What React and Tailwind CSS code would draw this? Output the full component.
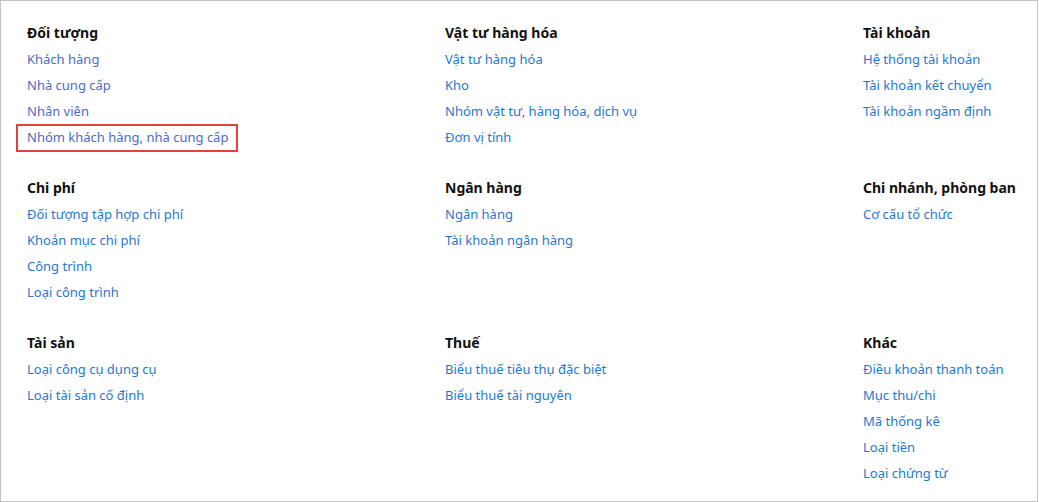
const sections = [
  {
    title: 'Đối tượng',
    items: ['Khách hàng', 'Nhà cung cấp', 'Nhân viên', 'Nhóm khách hàng, nhà cung cấp'],
    visited: true,
    marked: 3,
  },
  {
    title: 'Vật tư hàng hóa',
    items: ['Vật tư hàng hóa', 'Kho', 'Nhóm vật tư, hàng hóa, dịch vụ', 'Đơn vị tính'],
  },
  {
    title: 'Tài khoản',
    items: ['Hệ thống tài khoản', 'Tài khoản kết chuyển', 'Tài khoản ngầm định'],
  },
  {
    title: 'Chi phí',
    items: ['Đối tượng tập hợp chi phí', 'Khoản mục chi phí', 'Công trình', 'Loại công trình'],
  },
  {
    title: 'Ngân hàng',
    items: ['Ngân hàng', 'Tài khoản ngân hàng'],
  },
  {
    title: 'Chi nhánh, phòng ban',
    items: ['Cơ cấu tổ chức'],
  },
  {
    title: 'Tài sản',
    items: ['Loại công cụ dụng cụ', 'Loại tài sản cố định'],
  },
  {
    title: 'Thuế',
    items: ['Biểu thuế tiêu thụ đặc biệt', 'Biểu thuế tài nguyên'],
  },
  {
    title: 'Khác',
    items: ['Điều khoản thanh toán', 'Mục thu/chi', 'Mã thống kê', 'Loại tiền', 'Loại chứng từ'],
  },
];

const Section = ({ title, items, visited, marked }) => (
  <div className="flex flex-col">
    <h3 className="h-[26px] leading-[26px] text-[14px] font-bold text-[#111] whitespace-nowrap">{title}</h3>
    {items.map((item, i) => (
      <div key={item} className="h-[26px] leading-[26px]">
        <a
          href="#"
          className={`relative top-[-1px] text-[13px] whitespace-nowrap ${visited ? 'text-[#4d6cc6]' : 'text-[#1f78d1]'}`}
        >
          {item}
          {/* highlight box drawn over the link */}
          {marked === i && (
            <span className="absolute left-[-11px] top-[-4px] w-[222px] h-[28px] border-2 border-[#e5413b] pointer-events-none" />
          )}
        </a>
      </div>
    ))}
  </div>
);

export default function App() {
  return (
    <div
      className="w-[1038px] h-[502px] bg-white border border-[#c2c2c2] overflow-hidden"
      style={{ fontFamily: '"Noto Sans", "Open Sans", sans-serif' }}
    >
      <div className="grid grid-cols-[418px_418px_1fr] gap-y-[25px] pl-[26px] pt-[19px]">
        {sections.map((s) => (
          <Section key={s.title} {...s} />
        ))}
      </div>
    </div>
  );
}
